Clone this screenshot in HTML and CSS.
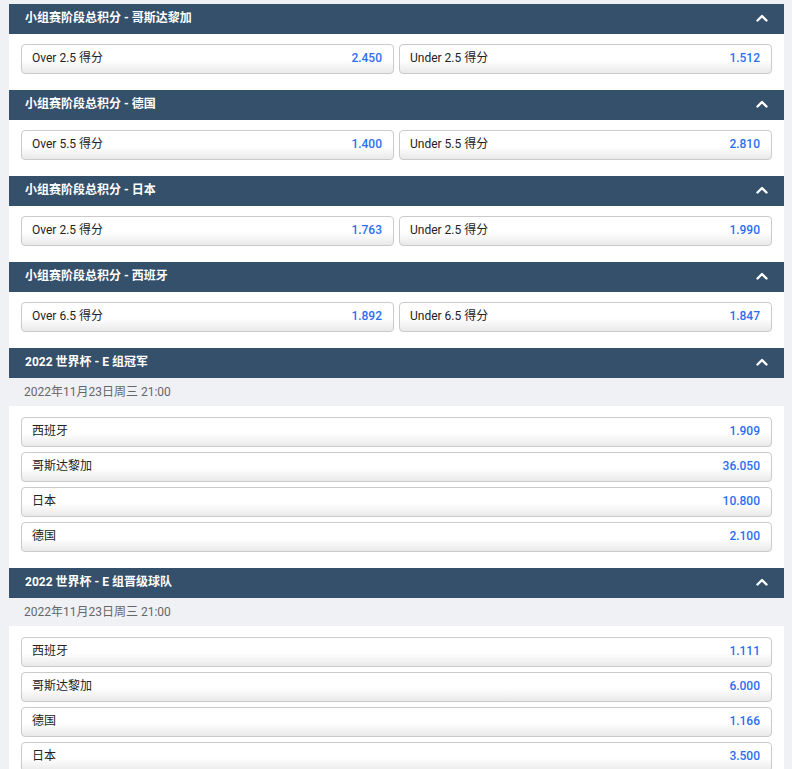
FILE: index.html
```html
<!DOCTYPE html>
<html lang="zh-CN">
<head>
    <meta charset="UTF-8">
    <title>2022 世界杯 - E 组</title>
    <link rel="stylesheet" href="styles.css">
</head>
<body>

<div class="markets">

    <div class="market">
        <div class="market-head">
            <span class="title">小组赛阶段总积分 - 哥斯达黎加</span>
            <svg class="chevron" width="12" height="8" viewBox="0 0 12 8"><polyline points="1.5,6.5 6,2 10.5,6.5"/></svg>
        </div>
        <div class="market-body pair">
            <div class="odd"><span class="label">Over 2.5 得分</span><span class="price">2.450</span></div>
            <div class="odd"><span class="label">Under 2.5 得分</span><span class="price">1.512</span></div>
        </div>
    </div>

    <div class="market">
        <div class="market-head">
            <span class="title">小组赛阶段总积分 - 德国</span>
            <svg class="chevron" width="12" height="8" viewBox="0 0 12 8"><polyline points="1.5,6.5 6,2 10.5,6.5"/></svg>
        </div>
        <div class="market-body pair">
            <div class="odd"><span class="label">Over 5.5 得分</span><span class="price">1.400</span></div>
            <div class="odd"><span class="label">Under 5.5 得分</span><span class="price">2.810</span></div>
        </div>
    </div>

    <div class="market">
        <div class="market-head">
            <span class="title">小组赛阶段总积分 - 日本</span>
            <svg class="chevron" width="12" height="8" viewBox="0 0 12 8"><polyline points="1.5,6.5 6,2 10.5,6.5"/></svg>
        </div>
        <div class="market-body pair">
            <div class="odd"><span class="label">Over 2.5 得分</span><span class="price">1.763</span></div>
            <div class="odd"><span class="label">Under 2.5 得分</span><span class="price">1.990</span></div>
        </div>
    </div>

    <div class="market">
        <div class="market-head">
            <span class="title">小组赛阶段总积分 - 西班牙</span>
            <svg class="chevron" width="12" height="8" viewBox="0 0 12 8"><polyline points="1.5,6.5 6,2 10.5,6.5"/></svg>
        </div>
        <div class="market-body pair">
            <div class="odd"><span class="label">Over 6.5 得分</span><span class="price">1.892</span></div>
            <div class="odd"><span class="label">Under 6.5 得分</span><span class="price">1.847</span></div>
        </div>
    </div>

    <div class="market">
        <div class="market-head">
            <span class="title">2022 世界杯 - E 组冠军</span>
            <svg class="chevron" width="12" height="8" viewBox="0 0 12 8"><polyline points="1.5,6.5 6,2 10.5,6.5"/></svg>
        </div>
        <div class="event-date">2022年11月23日周三 21:00</div>
        <div class="market-body list">
            <div class="odd"><span class="label">西班牙</span><span class="price">1.909</span></div>
            <div class="odd"><span class="label">哥斯达黎加</span><span class="price">36.050</span></div>
            <div class="odd"><span class="label">日本</span><span class="price">10.800</span></div>
            <div class="odd"><span class="label">德国</span><span class="price">2.100</span></div>
        </div>
    </div>

    <div class="market">
        <div class="market-head">
            <span class="title">2022 世界杯 - E 组晋级球队</span>
            <svg class="chevron" width="12" height="8" viewBox="0 0 12 8"><polyline points="1.5,6.5 6,2 10.5,6.5"/></svg>
        </div>
        <div class="event-date">2022年11月23日周三 21:00</div>
        <div class="market-body list">
            <div class="odd"><span class="label">西班牙</span><span class="price">1.111</span></div>
            <div class="odd"><span class="label">哥斯达黎加</span><span class="price">6.000</span></div>
            <div class="odd"><span class="label">德国</span><span class="price">1.166</span></div>
            <div class="odd"><span class="label">日本</span><span class="price">3.500</span></div>
        </div>
    </div>

</div>

</body>
</html>
```

FILE: styles.css
```css
* {
    box-sizing: border-box;
}
body {
    margin: 0;
    padding: 4px 8px 0 9px;
    background: #f0f1f5;
    font-family: Roboto, "Noto Sans CJK SC", sans-serif;
    font-size: 12px;
    color: #222;
}
.markets {
    width: 775px;
}
.market-head {
    display: flex;
    align-items: center;
    justify-content: space-between;
    height: 30px;
    padding: 0 16px 0 16px;
    background: #34506b;
    color: #fff;
    font-size: 12px;
    font-weight: bold;
}
.title {
    line-height: 1;
    margin-top: -2px;
}
.chevron {
    fill: none;
    stroke: #fff;
    stroke-width: 2.4;
    stroke-linecap: round;
    stroke-linejoin: round;
    margin-top: -2px;
}
.event-date {
    height: 28px;
    line-height: 28px;
    padding-left: 15px;
    background: #f0f1f5;
    color: #666;
    font-size: 12px;
}
.market-body {
    background: #fff;
    padding: 10px 12px 16px 12px;
}
.market-body.pair {
    display: grid;
    grid-template-columns: 1fr 1fr;
    gap: 5px;
}
.market-body.list {
    display: flex;
    flex-direction: column;
    gap: 5px;
    padding-top: 11px;
}
.odd {
    display: flex;
    align-items: center;
    justify-content: space-between;
    height: 30px;
    padding: 0 11px 0 10px;
    border: 1px solid #cacaca;
    border-radius: 4px;
    background: linear-gradient(#fff 55%, #e9e9e9);
    line-height: 1;
}
.label, .price {
    margin-top: -2px;
}
.price {
    color: #2a6ff2;
    font-weight: 500;
}
```
